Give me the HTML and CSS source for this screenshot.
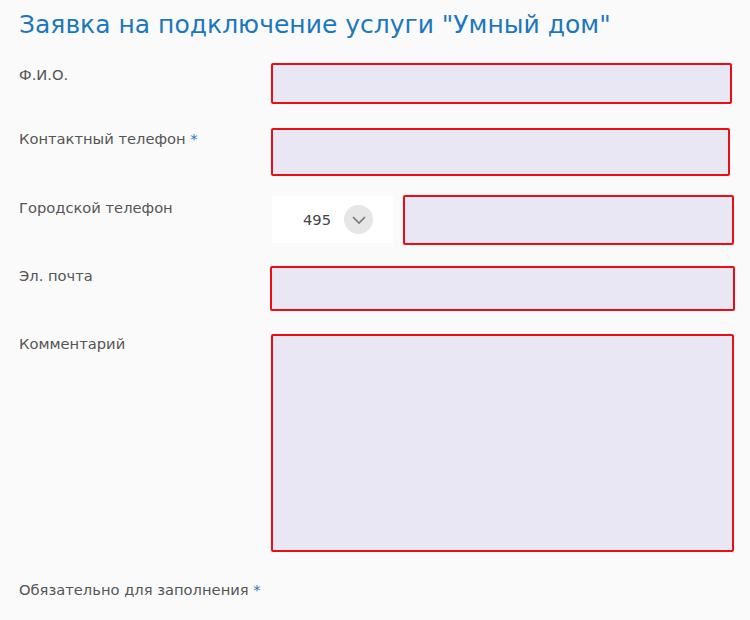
FILE: index.html
```html
<!DOCTYPE html>
<html>
  <head>
    <meta charset="UTF-8">
    <title>Заявка на подключение услуги "Умный дом"</title>
    <link rel="stylesheet" href="styles.css">
  </head>
  <body>
    <div id="page">
      <h1>Заявка на подключение услуги "Умный дом"</h1>
      <form id="order">
        <div class="row row-name">
          <label for="f-name">Ф.И.О.</label>
          <input id="f-name" class="field" type="text">
        </div>
        <div class="row row-phone">
          <label for="f-phone">Контактный телефон <span class="req">*</span></label>
          <input id="f-phone" class="field" type="text">
        </div>
        <div class="row row-city">
          <label for="f-city">Городской телефон</label>
          <div class="code">
            <span class="code-value">495</span>
            <span class="code-btn">
              <svg width="16" height="10" viewBox="0 0 16 10"><path d="M2 2 L8 8 L14 2" fill="none" stroke="#777" stroke-width="1.6"/></svg>
            </span>
          </div>
          <input id="f-city" class="field" type="text">
        </div>
        <div class="row row-mail">
          <label for="f-mail">Эл. почта</label>
          <input id="f-mail" class="field" type="text">
        </div>
        <div class="row row-comment">
          <label for="f-comment">Комментарий</label>
          <textarea id="f-comment" class="field"></textarea>
        </div>
      </form>
      <div id="foot">Обязательно для заполнения <span class="req">*</span></div>
    </div>
  </body>
</html>
```

FILE: styles.css
```css
      html,
      body {
        margin: 0;
        padding: 0;
        background: #fafafa;
        color: #555;
        font-family: "DejaVu Sans", verdana, sans-serif;
      }

      #page {
        padding: 10px 0 0 19px;
      }

      h1 {
        font-size: 25px;
        font-weight: normal;
        color: #1c78bd;
        margin: 0 0 23px;
        line-height: 30px;
      }

      .row {
        display: flex;
        align-items: flex-start;
      }

      .row label {
        width: 252px;
        flex: none;
        font-size: 14.7px;
        line-height: 18px;
        padding-top: 3px;
      }

      .req {
        color: #1c78bd;
      }

      .field {
        box-sizing: border-box;
        border: 2px solid #ec0c14;
        border-radius: 2px;
        background: #e9e7f3;
        margin: 0;
        padding: 0;
        font: inherit;
        outline: none;
      }

      .row-name .field {
        width: 461px;
        height: 41px;
      }

      .row-phone {
        margin-top: 24px;
      }

      .row-phone label {
        padding-top: 2px;
      }

      .row-phone .field {
        width: 459px;
        height: 48px;
      }

      .row-city {
        margin-top: 19px;
      }

      .row-city label {
        padding-top: 4px;
      }

      .code {
        box-sizing: border-box;
        width: 121px;
        height: 47px;
        margin: 1px 10px 0 1px;
        background: #fff;
        display: flex;
        align-items: center;
        padding-left: 31px;
        font-size: 14.7px;
        color: #444;
      }

      .code-btn {
        width: 29px;
        height: 29px;
        border-radius: 50%;
        background: #e6e6e6;
        margin-left: 13px;
        display: flex;
        align-items: center;
        justify-content: center;
      }

      .row-city .field {
        width: 331px;
        height: 50px;
      }

      .row-mail {
        margin-top: 21px;
      }

      .row-mail label {
        padding-top: 1px;
      }

      .row-mail .field {
        width: 465px;
        height: 45px;
        margin-left: -1px;
      }

      .row-comment {
        margin-top: 23px;
      }

      .row-comment label {
        padding-top: 1px;
      }

      .row-comment .field {
        width: 463px;
        height: 218px;
        resize: none;
      }

      #foot {
        font-size: 14.7px;
        margin-top: 29px;
        line-height: 18px;
      }
```
